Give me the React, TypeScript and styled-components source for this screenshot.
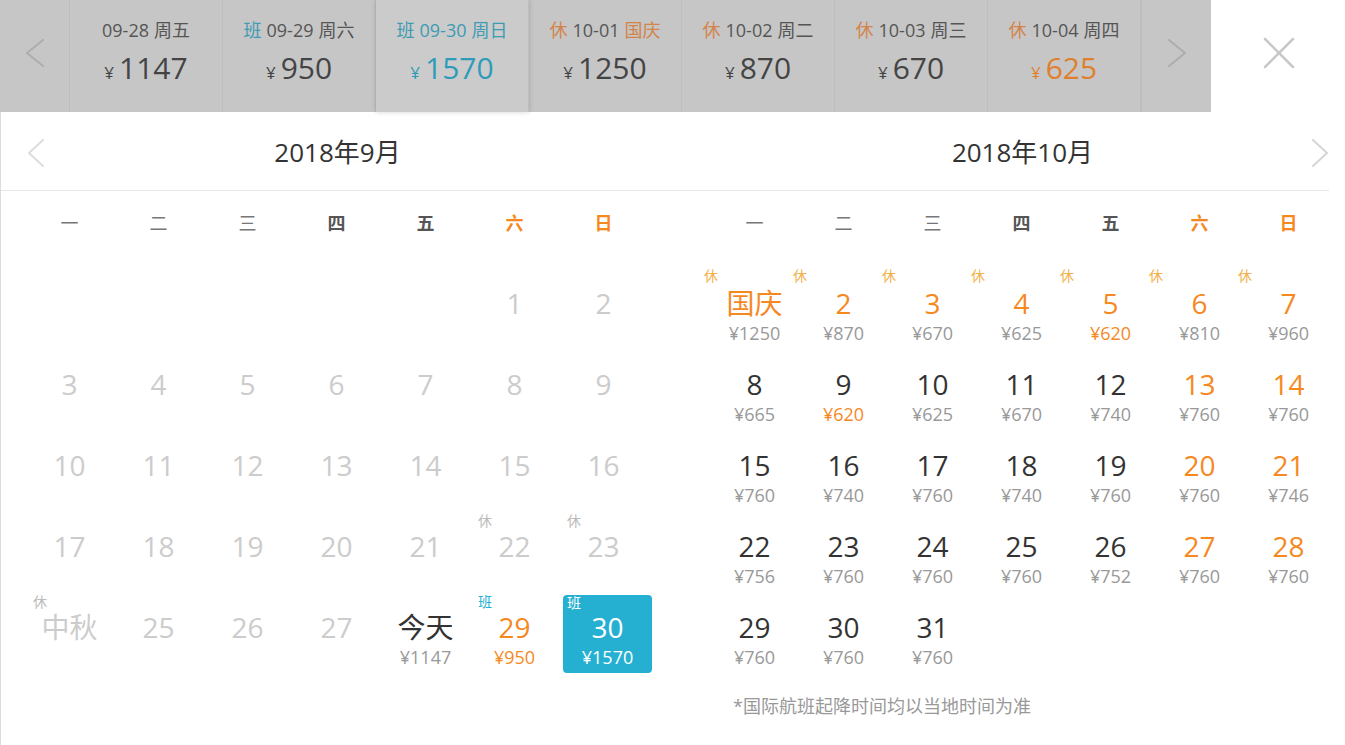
import React from "react";
import styled, { createGlobalStyle } from "styled-components";

const GlobalStyle = createGlobalStyle`
  html, body {
    margin: 0;
    padding: 0;
    background: #fff;
  }
  body {
    font-family: "Microsoft YaHei", "Open Sans", "Noto Sans CJK SC", sans-serif;
    color: #333;
  }
`;

const ORANGE = "#f5891f";
const TEAL = "#25b0d2";

type Tone = "past" | "normal" | "weekend";

interface Day {
  label: string;
  price?: string;
  tone: Tone;
  tag?: "休" | "班";
  cheap?: boolean;
  selected?: boolean;
}

interface StripItem {
  tag?: "休" | "班";
  date: string;
  week: string;
  price: number;
  selected?: boolean;
  festival?: boolean;
  lowest?: boolean;
}

const strip: StripItem[] = [
  { date: "09-28", week: "周五", price: 1147 },
  { tag: "班", date: "09-29", week: "周六", price: 950 },
  { tag: "班", date: "09-30", week: "周日", price: 1570, selected: true },
  { tag: "休", date: "10-01", week: "国庆", price: 1250, festival: true },
  { tag: "休", date: "10-02", week: "周二", price: 870 },
  { tag: "休", date: "10-03", week: "周三", price: 670 },
  { tag: "休", date: "10-04", week: "周四", price: 625, lowest: true },
];

const weekdays = ["一", "二", "三", "四", "五", "六", "日"];

const past = (n: number): Day => ({ label: String(n), tone: "past" });

const september: (Day | null)[] = [
  null, null, null, null, null, past(1), past(2),
  past(3), past(4), past(5), past(6), past(7), past(8), past(9),
  past(10), past(11), past(12), past(13), past(14), past(15), past(16),
  past(17), past(18), past(19), past(20), past(21),
  { label: "22", tone: "past", tag: "休" },
  { label: "23", tone: "past", tag: "休" },
  { label: "中秋", tone: "past", tag: "休" },
  past(25), past(26), past(27),
  { label: "今天", price: "¥1147", tone: "normal" },
  { label: "29", price: "¥950", tone: "weekend", tag: "班", cheap: true },
  { label: "30", price: "¥1570", tone: "normal", tag: "班", selected: true },
];

const octPrices = [
  1250, 870, 670, 625, 620, 810, 960,
  665, 620, 625, 670, 740, 760, 760,
  760, 740, 760, 740, 760, 760, 746,
  756, 760, 760, 760, 752, 760, 760,
  760, 760, 760,
];

const october: Day[] = octPrices.map((p, i) => {
  const n = i + 1;
  const holiday = n <= 7;
  const weekend = i % 7 >= 5;
  return {
    label: n === 1 ? "国庆" : String(n),
    price: `¥${p}`,
    tone: holiday || weekend ? "weekend" : "normal",
    tag: holiday ? "休" : undefined,
    cheap: n === 5 || n === 9,
  };
});

const Page = styled.div`
  width: 1345px;
  height: 745px;
  overflow: hidden;
`;

const TopBar = styled.div`
  display: flex;
  height: 112px;
`;

const Strip = styled.div`
  display: flex;
  width: 1211px;
  background: #c6c6c6;
`;

const StripArrow = styled.div<{ $side: "left" | "right" }>`
  width: 70px;
  display: flex;
  align-items: center;
  justify-content: center;
  padding-bottom: 6px;
  box-sizing: border-box;
  border-${(p) => (p.$side === "left" ? "right" : "left")}: 1px solid #bdbdbd;
`;

const StripCell = styled.div<{ $selected?: boolean }>`
  width: 153px;
  box-sizing: border-box;
  display: flex;
  flex-direction: column;
  align-items: center;
  padding-top: 18px;
  border-right: 1px solid #bebebe;
  background: ${(p) => (p.$selected ? "#cbcbcb" : "transparent")};
  box-shadow: ${(p) => (p.$selected ? "0 0 5px rgba(0, 0, 0, 0.18)" : "none")};
  position: relative;
  z-index: ${(p) => (p.$selected ? 1 : 0)};
  &:last-of-type {
    border-right: none;
  }
`;

const StripDate = styled.div<{ $teal?: boolean }>`
  font-size: 18px;
  line-height: 24px;
  color: ${(p) => (p.$teal ? "#3e9bb3" : "#555")};
  white-space: nowrap;
`;

const StripTag = styled.span<{ $kind: "休" | "班" }>`
  color: ${(p) => (p.$kind === "休" ? "#d3844a" : "#3e9bb3")};
  margin-right: 5px;
`;

const StripWeek = styled.span<{ $festival?: boolean }>`
  color: ${(p) => (p.$festival ? "#d3844a" : "inherit")};
  margin-left: 5px;
`;

const StripPrice = styled.div<{ $color: string }>`
  margin-top: 8px;
  font-size: 30px;
  line-height: 36px;
  color: ${(p) => p.$color};
  white-space: nowrap;
`;

const Yen = styled.span`
  font-size: 17px;
  margin-right: 5px;
`;

const CloseBox = styled.div`
  flex: 1;
  display: flex;
  align-items: center;
  justify-content: center;
  padding-bottom: 6px;
  padding-left: 2px;
`;

const Panel = styled.div`
  width: 1328px;
  border-left: 1px solid #dcdcdc;
  height: 633px;
`;

const Header = styled.div`
  display: grid;
  grid-template-columns: 70px 533px 110px 587px 1fr;
  align-items: center;
  height: 78px;
  border-bottom: 1px solid #e6e6e6;
`;

const HeaderArrow = styled.div<{ $end?: boolean }>`
  display: flex;
  justify-content: ${(p) => (p.$end ? "flex-end" : "center")};
  padding-right: ${(p) => (p.$end ? "1px" : "0")};
  padding-top: 4px;
`;

const MonthTitle = styled.div<{ $shift?: number }>`
  text-align: center;
  font-size: 26px;
  color: #333;
  padding-left: ${(p) => p.$shift ?? 0}px;
`;

const Months = styled.div`
  display: flex;
  gap: 62px;
  padding-left: 24px;
`;

const Month = styled.div`
  width: 623px;
`;

const WeekRow = styled.div`
  display: grid;
  grid-template-columns: repeat(7, 89px);
  align-items: center;
  height: 62px;
  margin-bottom: 17px;
`;

const WeekDay = styled.div<{ $weekend?: boolean; $dark?: boolean }>`
  text-align: center;
  font-size: 18px;
  font-weight: ${(p) => (p.$weekend || p.$dark ? 700 : 400)};
  color: ${(p) => (p.$weekend ? ORANGE : p.$dark ? "#555" : "#777")};
`;

const DayGrid = styled.div`
  display: grid;
  grid-template-columns: repeat(7, 89px);
  grid-auto-rows: 81px;
`;

const toneColor: Record<Tone, string> = {
  past: "#cccccc",
  normal: "#333333",
  weekend: ORANGE,
};

const DayCell = styled.div<{ $selected?: boolean }>`
  position: relative;
  box-sizing: border-box;
  display: flex;
  flex-direction: column;
  align-items: center;
  padding-top: 15px;
  margin: ${(p) => (p.$selected ? "1px -4px 2px 4px" : "1px 0 2px")};
  border-radius: 4px;
  background: ${(p) => (p.$selected ? TEAL : "transparent")};
`;

const DayNum = styled.div<{ $tone: Tone; $selected?: boolean }>`
  font-size: 28px;
  line-height: 34px;
  color: ${(p) => (p.$selected ? "#fff" : toneColor[p.$tone])};
  white-space: nowrap;
`;

const DayPrice = styled.div<{ $cheap?: boolean; $selected?: boolean }>`
  margin-top: 2px;
  font-size: 18px;
  line-height: 22px;
  color: ${(p) => (p.$selected ? "#fff" : p.$cheap ? ORANGE : "#999")};
`;

const DayTag = styled.span<{ $color: string; $left: number; $top: number }>`
  position: absolute;
  top: ${(p) => p.$top}px;
  left: ${(p) => p.$left}px;
  font-size: 14px;
  line-height: 14px;
  color: ${(p) => p.$color};
`;

const Note = styled.div`
  padding-left: 23px;
  margin-top: 17px;
  font-size: 18px;
  color: #999;
  white-space: nowrap;
`;

const Chevron = ({ dir, color, w = 16, h = 28 }: { dir: "left" | "right"; color: string; w?: number; h?: number }) => {
  const pts =
    dir === "left"
      ? `${w - 1},1 1,${h / 2} ${w - 1},${h - 1}`
      : `1,1 ${w - 1},${h / 2} 1,${h - 1}`;
  return (
    <svg width={w} height={h} viewBox={`0 0 ${w} ${h}`}>
      <polyline points={pts} fill="none" stroke={color} strokeWidth={2} strokeLinecap="round" strokeLinejoin="round" />
    </svg>
  );
};

const CloseIcon = () => (
  <svg width="32" height="32" viewBox="0 0 32 32">
    <path d="M2 2 L30 30 M30 2 L2 30" stroke="#c8c8c8" strokeWidth={2.5} strokeLinecap="round" />
  </svg>
);

const tagColor = (d: Day) => {
  if (d.selected) return "#fff";
  if (d.tag === "班") return TEAL;
  if (d.tone === "past") return "#bbbbbb";
  return "#f3b04a";
};

interface TagOffset {
  left: number;
  top: number;
}

const DayView = ({ day, tag }: { day: Day | null; tag: TagOffset }) => {
  if (!day) return <div />;
  return (
    <DayCell $selected={day.selected}>
      {day.tag && (
        <DayTag
          $color={tagColor(day)}
          $left={day.selected ? 4 : tag.left}
          $top={day.selected ? 1 : tag.top}
        >
          {day.tag}
        </DayTag>
      )}
      <DayNum $tone={day.tone} $selected={day.selected}>
        {day.label}
      </DayNum>
      {day.price && (
        <DayPrice $cheap={day.cheap} $selected={day.selected}>
          {day.price}
        </DayPrice>
      )}
    </DayCell>
  );
};

const MonthView = ({
  days,
  tag,
  children,
}: {
  days: (Day | null)[];
  tag: TagOffset;
  children?: React.ReactNode;
}) => (
  <Month>
    <WeekRow>
      {weekdays.map((w, i) => (
        <WeekDay key={w} $weekend={i >= 5} $dark={i === 3 || i === 4}>
          {w}
        </WeekDay>
      ))}
    </WeekRow>
    <DayGrid>
      {days.map((d, i) => (
        <DayView key={i} day={d} tag={tag} />
      ))}
    </DayGrid>
    {children}
  </Month>
);

export default function App() {
  return (
    <Page>
      <GlobalStyle />
      <TopBar>
        <Strip>
          <StripArrow $side="left">
            <Chevron dir="left" color="#adadad" w={18} />
          </StripArrow>
          {strip.map((s) => {
            const priceColor = s.selected ? "#2e9cb9" : s.lowest ? "#e0802e" : "#444";
            return (
              <StripCell key={s.date} $selected={s.selected}>
                <StripDate $teal={s.selected}>
                  {s.tag && <StripTag $kind={s.tag}>{s.tag}</StripTag>}
                  {s.date}
                  <StripWeek $festival={s.festival}>{s.week}</StripWeek>
                </StripDate>
                <StripPrice $color={priceColor}>
                  <Yen>¥</Yen>
                  {s.price}
                </StripPrice>
              </StripCell>
            );
          })}
          <StripArrow $side="right">
            <Chevron dir="right" color="#adadad" w={18} />
          </StripArrow>
        </Strip>
        <CloseBox>
          <CloseIcon />
        </CloseBox>
      </TopBar>
      <Panel>
        <Header>
          <HeaderArrow>
            <Chevron dir="left" color="#dddddd" />
          </HeaderArrow>
          <MonthTitle>2018年9月</MonthTitle>
          <div />
          <MonthTitle $shift={30}>2018年10月</MonthTitle>
          <HeaderArrow $end>
            <Chevron dir="right" color="#d5d5d5" />
          </HeaderArrow>
        </Header>
        <Months>
          <MonthView days={september} tag={{ left: 8, top: 0 }} />
          <MonthView days={october} tag={{ left: -6, top: -2 }}>
            <Note>*国际航班起降时间均以当地时间为准</Note>
          </MonthView>
        </Months>
      </Panel>
    </Page>
  );
}
